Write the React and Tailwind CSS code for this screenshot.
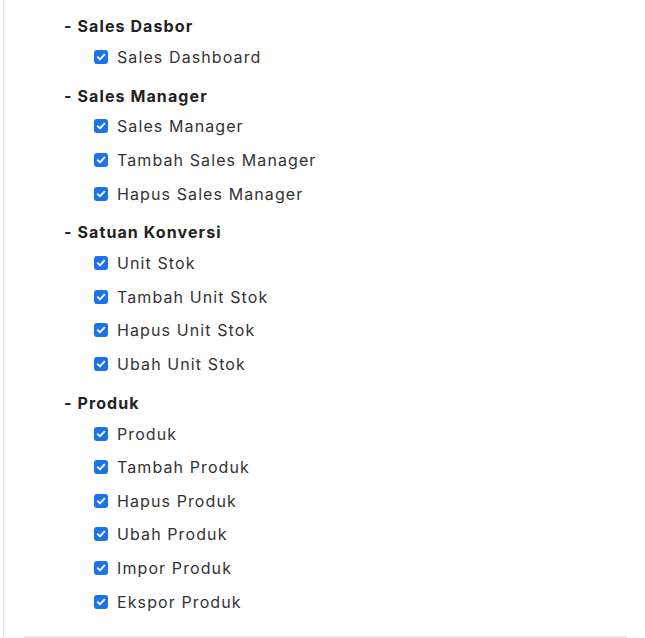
import React from "react";

const sections = [
  { title: "Sales Dasbor", items: ["Sales Dashboard"] },
  { title: "Sales Manager", items: ["Sales Manager", "Tambah Sales Manager", "Hapus Sales Manager"] },
  { title: "Satuan Konversi", items: ["Unit Stok", "Tambah Unit Stok", "Hapus Unit Stok", "Ubah Unit Stok"] },
  { title: "Produk", items: ["Produk", "Tambah Produk", "Hapus Produk", "Ubah Produk", "Impor Produk", "Ekspor Produk"] },
];

function Check() {
  return (
    <span className="w-[14px] h-[14px] rounded-[3px] bg-[#1a73e8] flex items-center justify-center shrink-0">
      <svg width="10" height="10" viewBox="0 0 10 10" fill="none">
        <path d="M1.8 5.2 L4 7.4 L8.3 2.6" stroke="white" strokeWidth="1.9" strokeLinecap="round" strokeLinejoin="round" />
      </svg>
    </span>
  );
}

export default function App() {
  return (
    <div className="w-[645px] h-[638px] bg-white overflow-hidden relative" style={{ fontFamily: "Inter, 'Noto Sans', sans-serif" }}>
      <div className="ml-[3px] h-full border-l border-[#e3e3e3] flex flex-col">
        <div className="pt-[14px] pl-[60px] flex flex-col gap-[10px] flex-1">
          {sections.map((s) => (
            <div key={s.title} className="flex flex-col gap-[2px]">
              <div className="h-[24px] flex items-center text-[16px] font-bold text-[#222] tracking-[1.1px]">
                - {s.title}
              </div>
              <div className="flex flex-col">
                {s.items.map((it) => (
                  <div key={it} className="h-[33.6px] flex items-center pl-[30px] gap-[9px]">
                    <Check />
                    <span className="text-[16px] text-[#333] tracking-[1.1px]">{it}</span>
                  </div>
                ))}
              </div>
            </div>
          ))}
        </div>
        <div className="ml-[20px] w-[603px] h-[2px] bg-[#e8e8e8]" />
      </div>
    </div>
  );
}
